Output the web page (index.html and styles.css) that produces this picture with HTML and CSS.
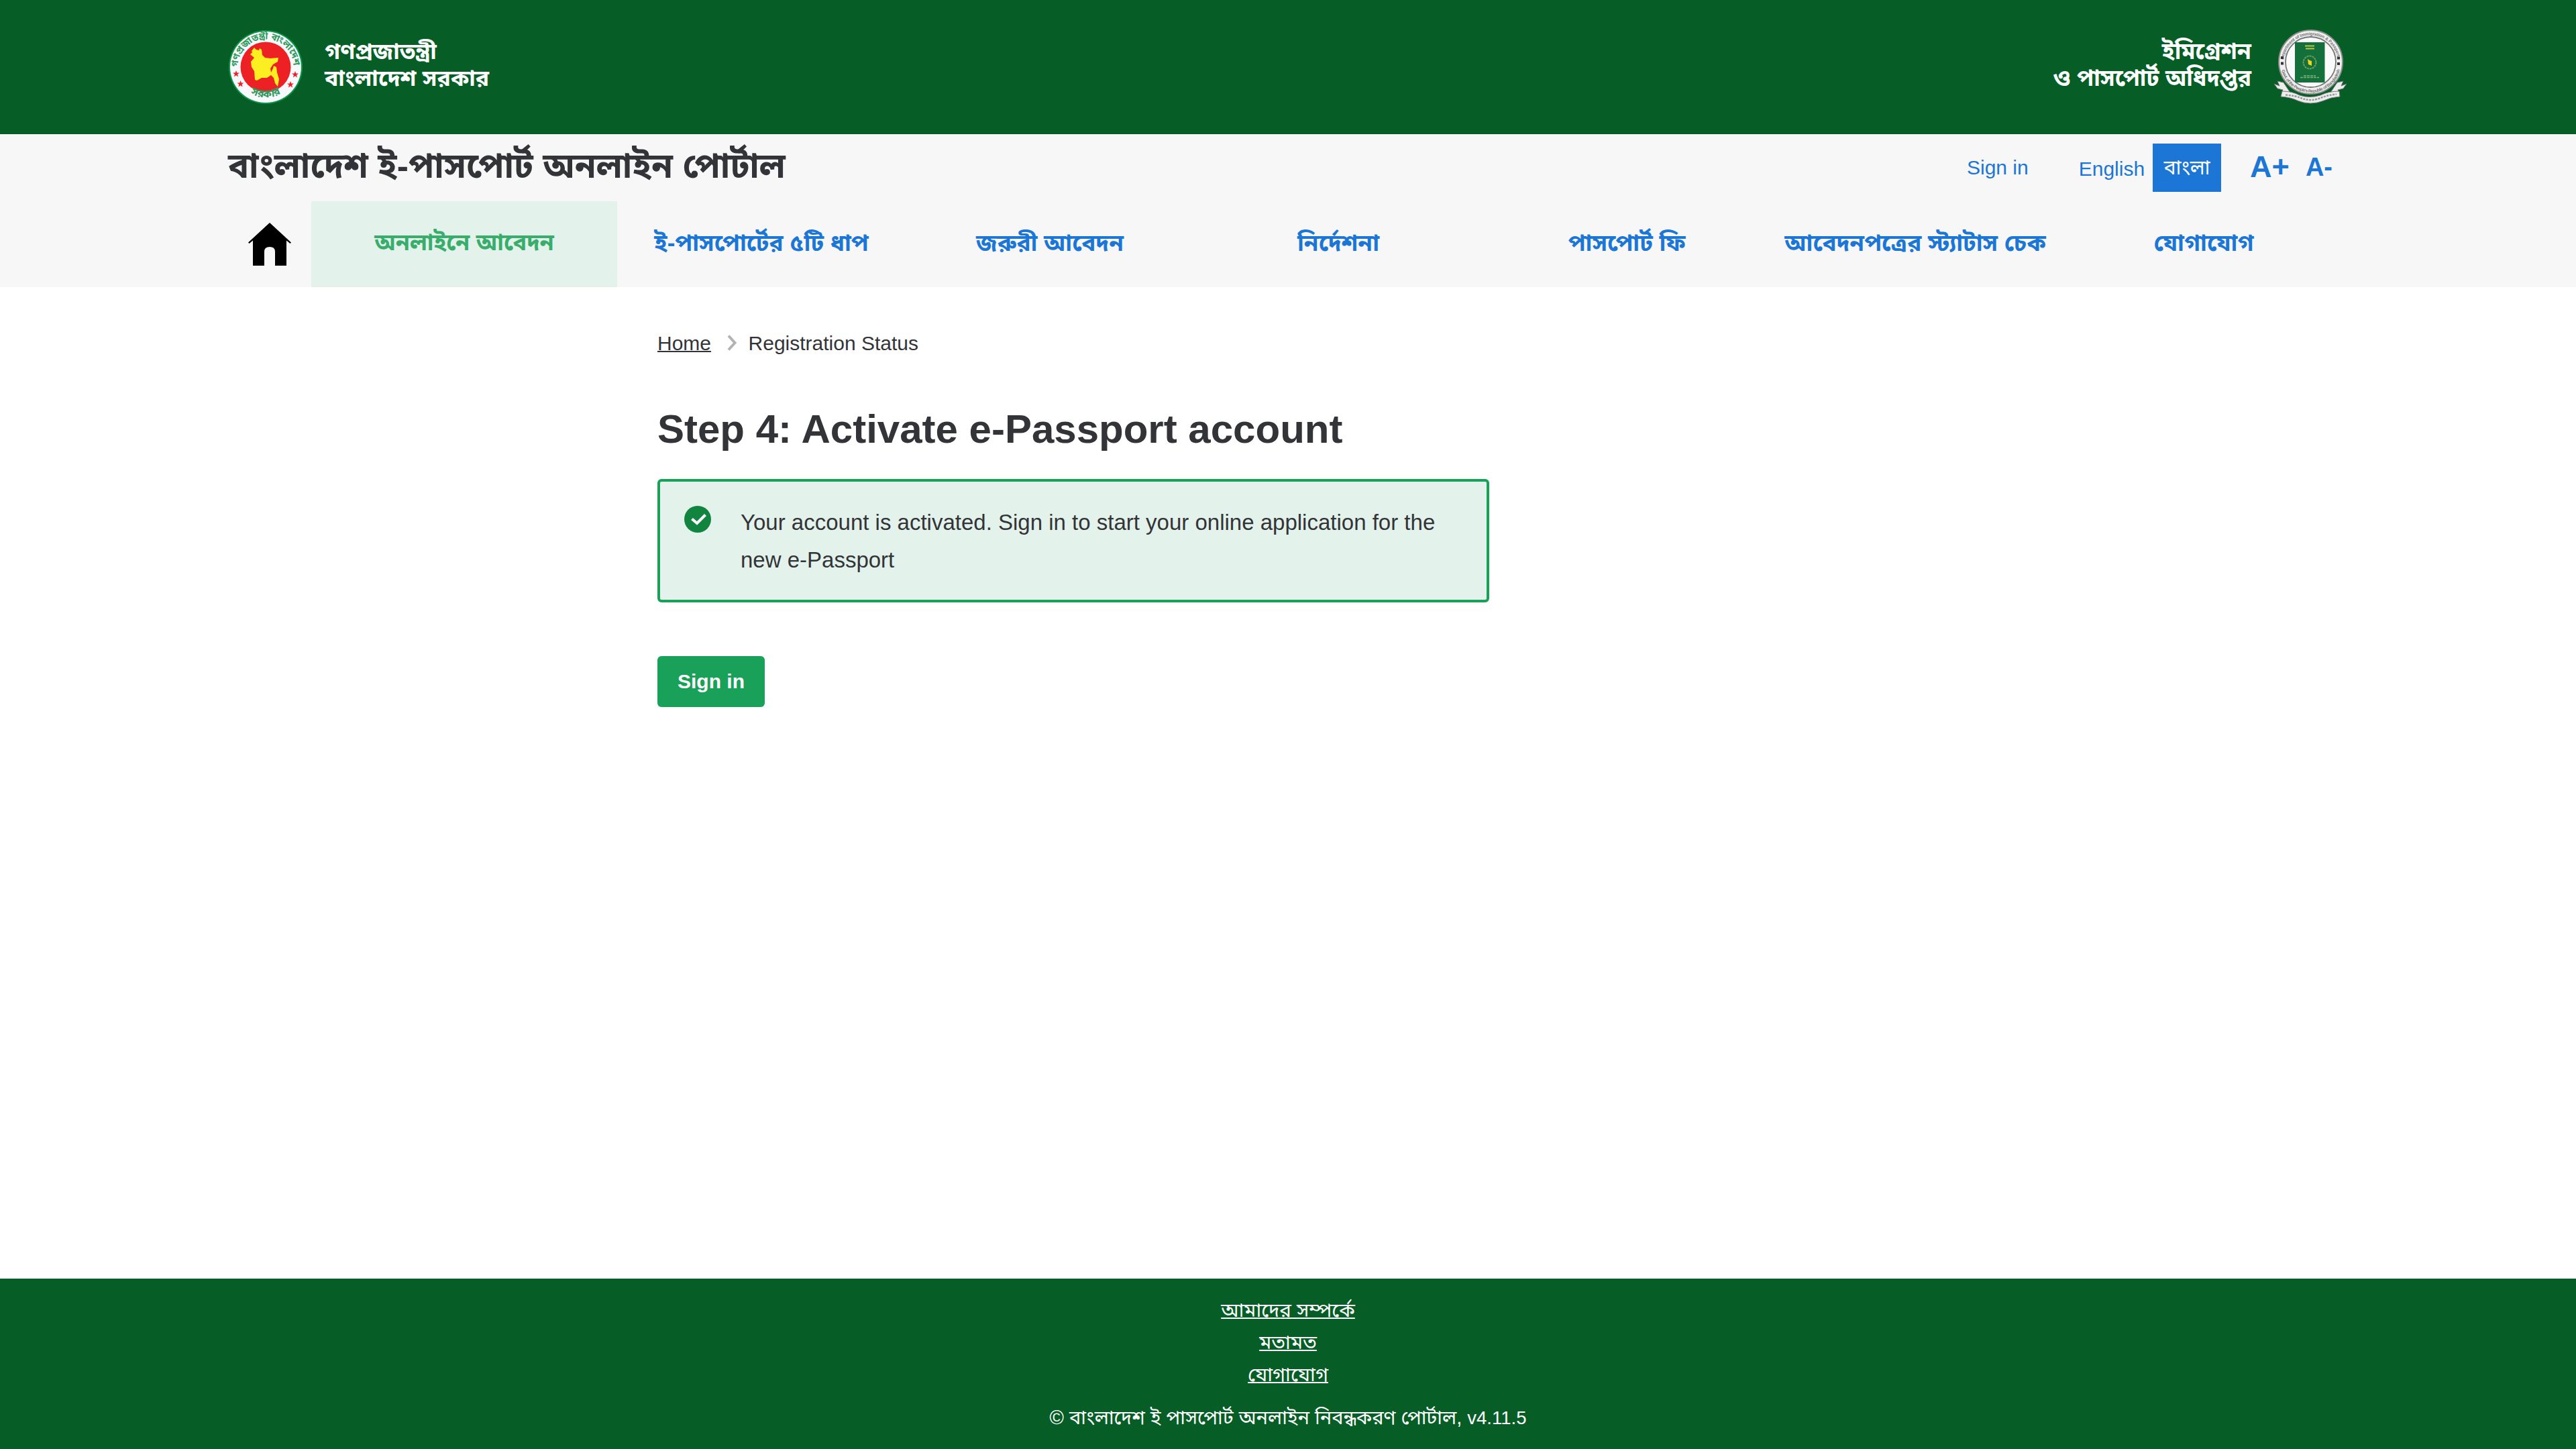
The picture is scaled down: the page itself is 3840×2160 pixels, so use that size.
FILE: index.html
```html
<!DOCTYPE html>
<html lang="bn">
<head>
<meta charset="utf-8">
<title>বাংলাদেশ ই-পাসপোর্ট অনলাইন পোর্টাল</title>
<link rel="stylesheet" href="styles.css">
</head>
<body>
<header class="gov">
  <div class="wrap gov-row">
    <div class="gov-side">
      <svg class="seal" viewBox="0 0 112 112">
        <defs>
          <path id="sealTop" d="M14.500 56A41.500 41.500 0 0 1 97.500 56"/>
          <path id="sealBottom" d="M14 74A46 46 0 0 0 98 74"/>
          <path id="star" d="M0-5 1.300-1.500 5-1.400 2.100.8 3.100 4.400 0 2.300-3.100 4.400-2.100.8-5-1.400-1.300-1.500z"/>
        </defs>
        <circle cx="56" cy="56" r="55" fill="#0c9447"/>
        <circle cx="56" cy="56" r="53" fill="#f7f9fc"/>
        <circle cx="56" cy="56" r="37.500" fill="#ed2024"/>
        <path d="M35 32l4-5 3 3 4 1 1-3 3 2 1 8 4 4 8 1 12-1-1 6-7 4-4 6 1 6 3-6 1-4 4 2 1 8 3 10-2 11-4-5-2-8-4-4-6 4-8 0-7 4-3-1-1-13-4-6-1-8 5-6-6-5 3-3z" fill="#fdee21"/>
        <g fill="#ed2024">
          <use href="#star" x="12" y="66"/><use href="#star" x="18.500" y="81"/>
          <use href="#star" x="100" y="67"/><use href="#star" x="93" y="82"/>
        </g>
        <g class="seal-text">
          <text><textPath href="#sealTop" textLength="128" lengthAdjust="spacingAndGlyphs">গণপ্রজাতন্ত্রী বাংলাদেশ</textPath></text>
          <text class="seal-low"><textPath href="#sealBottom" startOffset="50%" text-anchor="middle">সরকার</textPath></text>
        </g>
      </svg>
      <p class="gov-name">গণপ্রজাতন্ত্রী<br>বাংলাদেশ সরকার</p>
    </div>
    <div class="gov-side">
      <p class="gov-name gov-name-right">ইমিগ্রেশন<br>ও পাসপোর্ট অধিদপ্তর</p>
      <svg class="crest" viewBox="0 0 112 112">
        <defs>
          <path id="crestTop" d="M17 49A40.500 40.500 0 0 1 98 49"/>
          <path id="crestBottom" d="M12.500 49A45 45 0 0 0 102.500 49"/>
        </defs>
        <g fill="#ededed" stroke="#777" stroke-width="1">
          <path d="M3 81l8 3-3-7 9 2 12 18-15-2 2-5-8-2z"/>
          <path d="M111 81l-8 3 3-7-9 2-12 18 15-2-2-5 8-2z"/>
          <path d="M15 92q15 0 26 6 15 5 31 0 12-6 28-6l1 8q-14 1-24 6-20 8-39 0-10-5-25-6z"/>
        </g>
        <path d="M20 97.500q15 1 24 5 14 5 27 0 12-5 25-6" fill="none" stroke="#999" stroke-width="2.500" stroke-dasharray="3 1.500"/>
        <circle cx="57.500" cy="48.500" r="47.500" fill="#efefef" stroke="#8a8f8a" stroke-width="2"/>
        <circle cx="57.500" cy="48.500" r="37.500" fill="#fafafa" stroke="#777" stroke-width="1.800"/>
        <g class="crest-text">
          <text><textPath href="#crestTop" textLength="118" startOffset="4">Department of Immigration &amp; Passports</textPath></text>
          <text><textPath href="#crestBottom" textLength="118" startOffset="12">Govt. of the People's Republic of Bangladesh</textPath></text>
        </g>
        <path d="M13 40h4v4h-4zM13 48.500h4v4h-4zM97 40.500h4v4h-4zM97 49h4v4h-4z" fill="#333"/>
        <rect x="34" y="19" width="44.500" height="60" fill="#14703a"/>
        <path d="M49 24.500h14M50 28.500h13" stroke="#b5c84a" stroke-width="2.200"/>
        <circle cx="56" cy="49" r="9.500" fill="none" stroke="#6fa05c" stroke-width="2" stroke-dasharray="3 1"/>
        <path d="M53 44l3 2 3 1v7l-5-2z" fill="#f5d21b"/>
        <path d="M47 69h18M42 71.500h28" stroke="#7fae78" stroke-width="1.300" stroke-dasharray="4 1"/>
      </svg>
    </div>
  </div>
</header>

<div class="bar">
  <div class="wrap bar-top">
    <div class="portal">বাংলাদেশ ই-পাসপোর্ট অনলাইন পোর্টাল</div>
    <div class="tools">
      <a class="tool-signin">Sign in</a>
      <a class="tool-en">English</a>
      <a class="tool-bn">বাংলা</a>
      <a class="tool-plus">A+</a>
      <a class="tool-minus">A-</a>
    </div>
  </div>
  <nav class="wrap nav">
    <a class="nav-home">
      <svg class="home" viewBox="0 0 64 64"><path d="M32 0L64 29.500l-1.500 1.500L57 26.500V64H40V43q0-7-8-7t-8 7v21H7V26.500L1.500 31 0 29.500z"/></svg>
    </a>
    <a class="nav-item nav-active">অনলাইনে আবেদন</a>
    <a class="nav-item">ই-পাসপোর্টের ৫টি ধাপ</a>
    <a class="nav-item">জরুরী আবেদন</a>
    <a class="nav-item">নির্দেশনা</a>
    <a class="nav-item">পাসপোর্ট ফি</a>
    <a class="nav-item">আবেদনপত্রের স্ট্যাটাস চেক</a>
    <a class="nav-item">যোগাযোগ</a>
  </nav>
</div>

<main class="main">
  <div class="crumbs">
    <a class="crumb-link">Home</a>
    <svg class="chevron" viewBox="0 0 14 24"><path d="M2 1.500L11.500 12 2 22.500" fill="none" stroke="#b3b3b3" stroke-width="4"/></svg>
    <span>Registration Status</span>
  </div>
  <h1 class="title">Step 4: Activate e-Passport account</h1>
  <div class="alert">
    <svg class="check" viewBox="0 0 40 40"><circle cx="20" cy="20" r="20" fill="#11843f"/><path d="M11.500 19.500l7.500 6.500L31.500 13.500" fill="none" stroke="#fff" stroke-width="4.200"/></svg>
    <p class="alert-text">Your account is activated. Sign in to start your online application for the new e-Passport</p>
  </div>
  <button class="button">Sign in</button>
</main>

<footer class="footer">
  <a class="foot-link">আমাদের সম্পর্কে</a>
  <a class="foot-link">মতামত</a>
  <a class="foot-link">যোগাযোগ</a>
  <p class="copy">© বাংলাদেশ ই পাসপোর্ট অনলাইন নিবন্ধকরণ পোর্টাল, <span class="version">v4.11.5</span></p>
</footer>
</body>
</html>
```
FILE: styles.css
```css
* { box-sizing: border-box; }
body {
  margin: 0;
  min-height: 2160px;
  display: flex;
  flex-direction: column;
  background: #fff;
  color: #333438;
  font-family: "Liberation Sans", "Noto Sans Bengali", "Noto Sans", sans-serif;
  font-size: 30px;
}
p, h1 { margin: 0; }
.wrap { width: 3162px; margin-left: 340px; }

.gov { height: 200px; background: #065e26; color: #fff; }
.gov-row { height: 200px; display: flex; justify-content: space-between; align-items: center; }
.gov-side { display: flex; align-items: center; }
.seal { width: 112px; height: 112px; flex: none; }
.crest { width: 112px; height: 112px; flex: none; margin-right: 3px; }
.seal-text { font-size: 14px; font-weight: bold; fill: #2f9a5c; }
.seal-low { font-size: 16px; }
.crest-text { font-size: 6.500px; font-weight: bold; fill: #777; }
.gov-name { margin-left: 32px; padding-bottom: 8px; font-size: 33.700px; line-height: 40px; font-weight: bold; white-space: nowrap; }
.gov-name-right { margin: 0 31px 0 0; font-size: 34px; text-align: right; }

.bar { height: 228px; background: #f7f7f7; }
.bar-top { height: 100px; display: flex; justify-content: space-between; }
.portal { font-size: 51.600px; line-height: 94px; font-weight: bold; white-space: nowrap; }
.tools { display: flex; align-items: flex-start; color: #1b76d5; padding-right: 25px; white-space: nowrap; }
.tool-signin { line-height: 100px; margin-right: 75px; }
.tool-en { line-height: 104px; margin-right: 12px; }
.tool-bn { width: 102px; height: 72px; margin: 14px 43px 0 0; line-height: 72px; background: #1b76d5; color: #fff; text-align: center; }
.tool-plus { font-size: 45px; line-height: 98px; font-weight: bold; margin-right: 24px; }
.tool-minus { font-size: 38px; line-height: 98px; font-weight: bold; }

.nav { height: 128px; display: flex; }
.nav-home { width: 124px; padding: 32px 30px; }
.home { display: block; width: 64px; height: 64px; }
.nav-item { width: 430px; line-height: 123px; text-align: center; font-size: 35px; font-weight: bold; color: #1b76d5; white-space: nowrap; }
.nav-active { width: 456px; height: 128px; font-size: 34.200px; background: #e3f2ea; color: #38ad6c; }

.main { flex: 1; margin-left: 980px; width: 1240px; padding-top: 66px; }
.crumbs { display: flex; align-items: center; height: 36px; line-height: 36px; }
.crumb-link { text-decoration: underline; text-decoration-thickness: 2px; }
.chevron { width: 14px; height: 24px; margin: 0 17.500px 0 24px; position: relative; top: -1px; }
.title { margin-top: 74px; font-size: 60px; line-height: 72px; font-weight: bold; white-space: nowrap; }
.alert { display: flex; margin-top: 38px; height: 184px; padding: 36px; border: 4px solid #1aa159; border-radius: 6px; background: #e3f2ea; }
.check { width: 40px; height: 40px; flex: none; margin-right: 44px; }
.alert-text { font-size: 33px; line-height: 56px; margin-top: -3px; }
.button { display: block; width: 160px; height: 76px; margin-top: 80px; padding: 0; border: 0; border-radius: 6px; background: #1aa159; color: #fff; font: bold 30px "Liberation Sans", sans-serif; }

.footer { height: 254px; padding-top: 23px; background: #065e26; color: #fff; display: flex; flex-direction: column; align-items: center; font-size: 29.500px; white-space: nowrap; }
.foot-link { line-height: 48px; text-decoration: underline; text-decoration-thickness: 2px; }
.copy { margin-top: 16px; line-height: 48px; font-size: 29px; }
.version { font-size: 27.500px; }
```
